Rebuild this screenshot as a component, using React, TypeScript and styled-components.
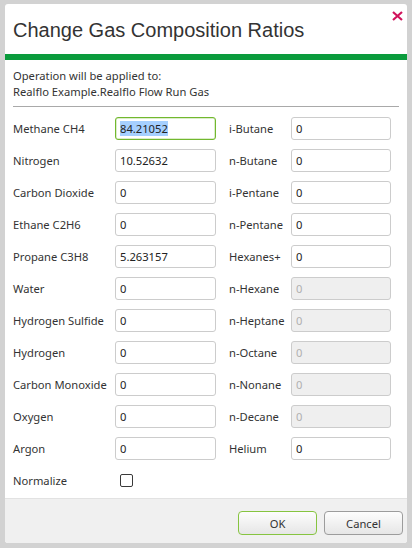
import React, { useEffect, useRef } from "react";
import styled, { createGlobalStyle } from "styled-components";

const GlobalStyle = createGlobalStyle`
  html, body {
    margin: 0;
    padding: 0;
    background: #d2d2d2;
  }
  body {
    font-family: "Noto Sans", "Open Sans", sans-serif;
  }
`;

const Frame = styled.div`
  width: 412px;
  height: 548px;
  box-sizing: border-box;
  padding: 4px 5px 5px 5px;
  background: #d2d2d2;
`;

const Dialog = styled.div`
  position: relative;
  height: 539px;
  background: #ffffff;
  border-radius: 3px;
  display: flex;
  flex-direction: column;
  overflow: hidden;
`;

const Header = styled.div`
  height: 50px;
  display: flex;
  align-items: center;
  padding: 0 8px;
  padding-top: 2px;
  box-sizing: border-box;
`;

const Title = styled.h1`
  margin: 0;
  font-family: "Liberation Sans", Arial, sans-serif;
  font-weight: normal;
  font-size: 20px;
  color: #333333;
`;

const CloseButton = styled.button`
  position: absolute;
  top: 5px;
  right: 3px;
  width: 14px;
  height: 14px;
  padding: 0;
  border: none;
  background: transparent;
  cursor: pointer;
  display: flex;
  align-items: center;
  justify-content: center;
`;

const GreenBar = styled.div`
  height: 6px;
  background: #0a9b3c;
`;

const Body = styled.div`
  flex: 1;
  padding: 8px 8px 0 8px;
  font-size: 11.2px;
  color: #333333;
`;

const Info = styled.div`
  line-height: 16px;
  padding-bottom: 6px;
  border-bottom: 1px solid #a9a9a9;
`;

const Grid = styled.div`
  display: grid;
  grid-template-columns: 102px 101px 75px 100px;
  grid-auto-rows: 23px;
  row-gap: 9px;
  margin-top: 10px;
  align-items: center;
`;

const Label = styled.label<{ $right?: boolean }>`
  padding-left: ${(p) => (p.$right ? "13px" : "0")};
  white-space: nowrap;
`;

const Field = styled.input<{ $focused?: boolean }>`
  box-sizing: border-box;
  width: 100%;
  height: 23px;
  padding: 0 4px;
  font-family: "Noto Sans", "Open Sans", sans-serif;
  font-size: 11.2px;
  color: #222222;
  background: #ffffff;
  border: 1px solid ${(p) => (p.$focused ? "#72b82e" : "#cccccc")};
  border-radius: 3px;
  outline: none;

  &&:focus,
  &&:focus-visible {
    outline: 0 none transparent;
    border: 1px solid #72b82e;
    box-shadow: inset 0 0 0 0.5px rgba(114, 184, 46, 0.5);
  }

  &::selection {
    background: #a6d0ff;
    color: #222222;
  }

  &:disabled {
    background: #efefef;
    color: #b0b0b0;
  }
`;

const CheckBox = styled.input`
  appearance: none;
  margin: 0 0 0 5px;
  width: 13px;
  height: 13px;
  border: 1px solid #3a3a3a;
  border-radius: 2px;
  background: #ffffff;
`;

const Footer = styled.div`
  height: 45px;
  box-sizing: border-box;
  border-top: 1px solid #e2e2e2;
  background: #f0f0f0;
  display: flex;
  justify-content: flex-end;
  align-items: flex-start;
  gap: 7px;
  padding: 12px 4px 0 0;
`;

const Button = styled.button<{ $primary?: boolean }>`
  width: 79px;
  height: 24px;
  font-family: "Noto Sans", "Open Sans", sans-serif;
  font-size: 11.2px;
  color: #333333;
  border: 1px solid ${(p) => (p.$primary ? "#86c440" : "#9c9c9c")};
  border-radius: 4px;
  background: linear-gradient(#fdfdfd, #e6e6e6);
  cursor: pointer;
`;

type Row = [string, string, boolean?];

const left: Row[] = [
  ["Methane CH4", "84.21052"],
  ["Nitrogen", "10.52632"],
  ["Carbon Dioxide", "0"],
  ["Ethane C2H6", "0"],
  ["Propane C3H8", "5.263157"],
  ["Water", "0"],
  ["Hydrogen Sulfide", "0"],
  ["Hydrogen", "0"],
  ["Carbon Monoxide", "0"],
  ["Oxygen", "0"],
  ["Argon", "0"],
];

const right: Row[] = [
  ["i-Butane", "0"],
  ["n-Butane", "0"],
  ["i-Pentane", "0"],
  ["n-Pentane", "0"],
  ["Hexanes+", "0"],
  ["n-Hexane", "0", true],
  ["n-Heptane", "0", true],
  ["n-Octane", "0", true],
  ["n-Nonane", "0", true],
  ["n-Decane", "0", true],
  ["Helium", "0"],
];

const App: React.FC = () => {
  const firstRef = useRef<HTMLInputElement>(null);

  useEffect(() => {
    firstRef.current?.focus();
    firstRef.current?.select();
  }, []);

  return (
    <>
      <GlobalStyle />
      <Frame>
        <Dialog>
          <Header>
            <Title>Change Gas Composition Ratios</Title>
          </Header>
          <CloseButton aria-label="Close">
            <svg width="11" height="10" viewBox="0 0 11 10">
              <path d="M1 1 L10 9 M10 1 L1 9" stroke="#d0135b" strokeWidth="2.2" />
            </svg>
          </CloseButton>
          <GreenBar />
          <Body>
            <Info>
              Operation will be applied to:
              <br />
              Realflo Example.Realflo Flow Run Gas
            </Info>
            <Grid>
              {left.map((row, i) => (
                <React.Fragment key={row[0]}>
                  <Label>{row[0]}</Label>
                  <Field
                    ref={i === 0 ? firstRef : undefined}
                    $focused={i === 0}
                    defaultValue={row[1]}
                  />
                  <Label $right>{right[i][0]}</Label>
                  <Field defaultValue={right[i][1]} disabled={right[i][2]} />
                </React.Fragment>
              ))}
              <Label>Normalize</Label>
              <CheckBox type="checkbox" />
            </Grid>
          </Body>
          <Footer>
            <Button $primary>OK</Button>
            <Button>Cancel</Button>
          </Footer>
        </Dialog>
      </Frame>
    </>
  );
};

export default App;
